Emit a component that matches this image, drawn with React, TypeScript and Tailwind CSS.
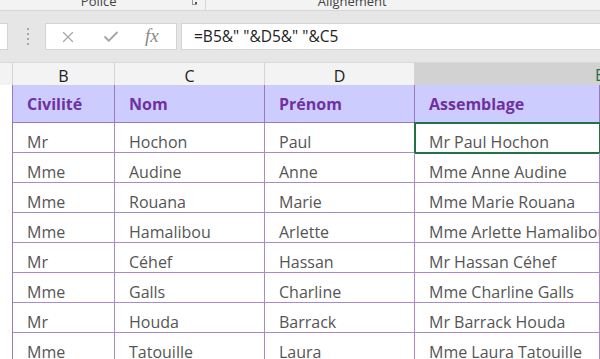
import { X, Check } from "lucide-react";

const rows = [
  ["Mr", "Hochon", "Paul"],
  ["Mme", "Audine", "Anne"],
  ["Mme", "Rouana", "Marie"],
  ["Mme", "Hamalibou", "Arlette"],
  ["Mr", "Céhef", "Hassan"],
  ["Mme", "Galls", "Charline"],
  ["Mr", "Houda", "Barrack"],
  ["Mme", "Tatouille", "Laura"],
];

const font = { fontFamily: '"Open Sans", "Noto Sans", sans-serif' };

export default function App() {
  return (
    <div className="w-[600px] h-[359px] overflow-hidden bg-white" style={font}>
      {/* Ribbon group labels */}
      <div className="h-[11px] bg-[#f3f3f3] border-b border-[#d6d6d6] flex overflow-hidden text-[13px] text-[#444] leading-none">
        <div className="w-[241px] relative border-r border-[#d6d6d6] flex justify-center">
          <span className="-mt-[5px] ml-[-8px]">Police</span>
          <span className="absolute right-[8px] top-0 w-[5px] h-[5px] border-l border-b border-[#999]">
            <span className="absolute right-0 bottom-0 w-[2px] h-[2px] bg-[#555]" />
          </span>
        </div>
        <div className="w-[460px] flex justify-center">
          <span className="-mt-[5px] ml-[-102px]">Alignement</span>
        </div>
      </div>

      {/* Formula bar */}
      <div className="bg-[#e6e6e6] pt-[12px] pb-[12px] flex items-stretch h-[51px]">
        <div className="w-[8px] bg-white border-y border-r border-[#d4d4d4]" />
        <div className="w-[37px] flex flex-col items-center justify-center gap-[3px] pl-[2px]">
          <span className="w-[2px] h-[2px] bg-[#a8a8a8]" />
          <span className="w-[2px] h-[2px] bg-[#a8a8a8]" />
          <span className="w-[2px] h-[2px] bg-[#a8a8a8]" />
          <span className="w-[2px] h-[2px] bg-[#a8a8a8]" />
        </div>
        <div className="w-[132px] bg-white border border-[#d4d4d4] flex items-center text-[#a6a6a6]">
          <X className="w-[18px] h-[18px] ml-[13px]" strokeWidth={1.6} />
          <Check className="w-[18px] h-[18px] ml-[25px]" strokeWidth={2.4} />
          <span
            className="ml-[25px] text-[19px] italic text-[#8a8a8a]"
            style={{ fontFamily: '"Liberation Serif", serif' }}
          >
            fx
          </span>
        </div>
        <div className="ml-[4px] flex-1 bg-white border-y border-l border-[#d4d4d4] flex items-center pl-[12px] text-[15.5px] text-[#222]">
          =B5&amp;" "&amp;D5&amp;" "&amp;C5
        </div>
      </div>

      {/* Column headers */}
      <div className="grid grid-cols-[13px_102px_150px_150px_185px] h-[23px] bg-[#f3f3f3] text-[16px] text-[#222] border-t border-[#d9d9d9]">
        <div className="border-r border-[#d4d4d4]" />
        <div className="border-r border-[#d4d4d4] flex items-center justify-center">B</div>
        <div className="border-r border-[#d4d4d4] flex items-center justify-center">C</div>
        <div className="border-r border-[#d4d4d4] flex items-center justify-center">D</div>
        <div className="bg-[#d2d2d2] border-b-2 border-[#217346] flex items-center justify-end text-[#217346] -mr-[4px]">
          E
        </div>
      </div>

      {/* Sheet */}
      <div className="grid grid-cols-[13px_102px_150px_150px_185px]">
        <div className="border-r border-[#9b78c0] h-[38px] bg-white" />
        {["Civilité", "Nom", "Prénom", "Assemblage"].map((h) => (
          <div
            key={h}
            className="h-[38px] bg-[#ccccff] border-r border-b border-[#9b78c0] flex items-center pl-[14px] font-bold text-[16px] text-[#7030a0]"
          >
            {h}
          </div>
        ))}
        {rows.map(([civ, nom, prenom], i) => (
          <Row key={i} cells={[civ, nom, prenom, `${civ} ${prenom} ${nom}`]} selected={i === 0} />
        ))}
      </div>
    </div>
  );
}

function Row({ cells, selected }: { cells: string[]; selected: boolean }) {
  return (
    <>
      <div className="h-[30px] border-r border-[#9b78c0] bg-white" />
      {cells.map((c, j) => (
        <div
          key={j}
          className={`h-[30px] border-r border-b border-[#a98bcb] flex items-end pb-[1px] pl-[14px] text-[16px] leading-[18px] text-[#555] whitespace-nowrap overflow-hidden ${
            selected && j === 3 ? "outline-2 outline-[#217346] -outline-offset-1" : ""
          }`}
        >
          {c}
        </div>
      ))}
    </>
  );
}
